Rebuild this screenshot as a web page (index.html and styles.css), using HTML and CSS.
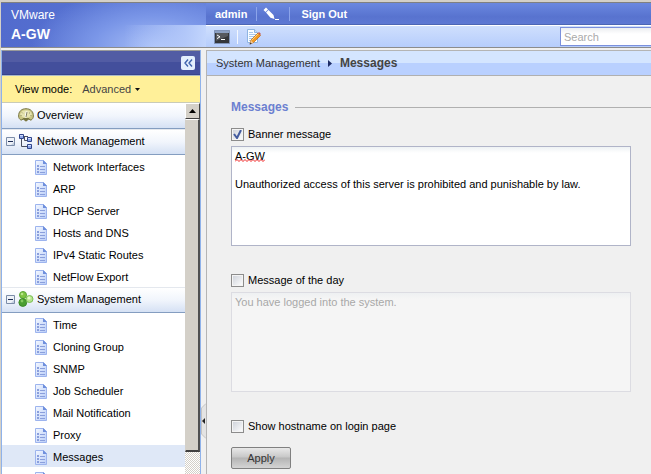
FILE: index.html
```html
<!DOCTYPE html>
<html lang="en">
<head>
<meta charset="utf-8">
<title>A-GW - Messages</title>
<link rel="stylesheet" href="styles.css">
</head>
<body>
<svg class="defs" aria-hidden="true">
  <defs>
    <linearGradient id="pageFill" x1="0" y1="0" x2="1" y2="1">
      <stop offset="0" stop-color="#f4f8ff"/><stop offset="1" stop-color="#b9cdf8"/>
    </linearGradient>
    <symbol id="page" viewBox="0 0 12 15">
      <path d="M.5 .5H8.500L11.500 3.500V14.500H.5Z" fill="url(#pageFill)" stroke="#9db4ee"/>
      <path d="M8 0L12 4H8Z" fill="#6f8fdc"/>
      <path d="M2 5h2v2H2zM2 8h2v2H2zM2 11h2v2H2z" fill="#8a9fdc"/>
      <path d="M5 6.500h5M5 9.500h5M5 12.500h5" stroke="#8a9fdc"/>
    </symbol>
    <symbol id="minus" viewBox="0 0 9 9">
      <path d="M.5 .5h8v8h-8z" fill="#eef2f8" stroke="#7b8ca8"/>
      <path d="M5 8h3V5z" fill="#c3cfe0"/>
      <path d="M2 4.500h5" stroke="#1d2c55"/>
    </symbol>
  </defs>
</svg>
<div class="app">
  <header class="top">
    <div class="brand"><span class="vendor">VMware</span><strong class="host">A-GW</strong></div>
    <div class="bars">
      <div class="userbar">
        <a href="#" class="user">admin</a>
        <span class="sep"></span>
        <button class="iconbtn edit" aria-label="Edit">
          <svg width="17" height="14" viewBox="0 0 17 14"><path d="M.5 3L3 .5 5 2.500 2.500 5zM3 5.500L5.500 3l5 5 1 4-4-1.300z" fill="#fff"/><path d="M12 12.500h4" stroke="#fff"/></svg>
        </button>
        <span class="sep"></span>
        <a href="#" class="signout">Sign Out</a>
      </div>
      <div class="toolbar">
        <button class="iconbtn" aria-label="Command line">
          <svg width="16" height="14" viewBox="0 0 16 14"><path d="M.5 .5h15v13H.5z" fill="#34363a" stroke="#7f93b8"/><path d="M1 1h14v2H1z" fill="#8b9fc2"/><path d="M2 3h12v3L2 11z" fill="#56595f"/><path d="M3 5l3 1.800-3 1.800M7 9.500h4" fill="none" stroke="#fff"/></svg>
        </button>
        <span class="sep light"></span>
        <button class="iconbtn" aria-label="Notes">
          <svg width="15" height="16" viewBox="0 0 15 16"><path d="M1.500 .5h7l3 3v10h-10z" fill="#fafdff" stroke="#8fb5e2"/><path d="M8.500 .5v3h3" fill="#cfe2f8" stroke="#8fb5e2"/><path d="M3 3.500h4M3 5.500h7M3 7.500h6M3 9.500h4M3 11.500h2" stroke="#a9c7ea"/><path d="M4 15l1-4 7-7 2.500 2.500-7 7z" fill="#f29a22" stroke="#bb6413" stroke-width=".7"/><path d="M5.500 11.500l7-7" stroke="#ffd272"/><path d="M4 15l1-3.500 2.500 2.500z" fill="#edc89c"/><path d="M3.500 15.500l1-2 1.300 1.200z" fill="#333"/><path d="M12 4l1-1 2 2-1 1z" fill="#c95b50"/></svg>
        </button>
        <input class="search" type="text" placeholder="Search" aria-label="Search">
      </div>
    </div>
  </header>
  <div class="body">
    <aside class="side">
      <div class="sidehead">
        <button class="collapse" aria-label="Collapse navigation">
          <svg width="9" height="8" viewBox="0 0 9 8"><path d="M4 .5L1 4l3 3.500M8 .5L5 4l3 3.500" fill="none" stroke="#3e62ad" stroke-width="1.400"/></svg>
        </button>
      </div>
      <div class="mode">
        <label for="mode">View mode:</label>
        <select id="mode"><option>Advanced</option></select>
        <svg width="5" height="3" viewBox="0 0 5 3"><path d="M0 0h5L2.500 3z" fill="#111"/></svg>
      </div>
      <div class="treewrap">
        <nav class="tree">
          <a href="#" class="group overview">
            <svg class="gicon" width="16" height="14" viewBox="0 0 16 14"><path d="M.6 8C.5 3.500 3.500 .7 8 .7S15.500 3.500 15.400 8c0 2-1 3.300-2.500 4.200L10.500 11 8 13.200 5.500 11l-2.400 1.200C1.600 11.300 .6 10 .6 8z" fill="#c9c583" stroke="#7d7a48"/><path d="M2 7.500C2.300 4 4.500 2.200 8 2.200s5.700 1.800 6 5.300L10.500 9.500h-5z" fill="#e6e3b0"/><path d="M3 12l2.500-2h5l2.500 2-2.500-.6L8 13.200 5.500 11.400z" fill="#77753f"/><path d="M2.500 7.500h1M4 4.500l.8.8M12 4.500l-.8.8M13.500 7.500h-1" stroke="#8d8a58"/><path d="M7.500 9.500l1.200-6" stroke="#fff" stroke-width="1.800"/><path d="M8 9l1-5" stroke="#5f5c35" stroke-width=".8"/></svg>
            <span>Overview</span></a>
          <a href="#" class="group"><svg class="toggle"><use href="#minus"/></svg>
            <svg class="gicon" width="16" height="16" viewBox="0 0 16 16"><path d="M6 3.500h4M3.500 6v7.500H9M6.500 3.500v4H9" fill="none" stroke="#4a4f60"/><g fill="#8fa8e8" stroke="#2f458c"><path d="M1.500 1.500h4v4h-4zM9.500 4.500h4v4h-4zM9.500 11.500h4v4h-4z"/></g><path d="M2 2h3v1H2zM10 5h3v1h-3zM10 12h3v1h-3z" fill="#d3defc"/></svg>
            <span>Network Management</span></a>
          <ul>
            <li><a href="#"><svg class="page"><use href="#page"/></svg>Network Interfaces</a></li>
            <li><a href="#"><svg class="page"><use href="#page"/></svg>ARP</a></li>
            <li><a href="#"><svg class="page"><use href="#page"/></svg>DHCP Server</a></li>
            <li><a href="#"><svg class="page"><use href="#page"/></svg>Hosts and DNS</a></li>
            <li><a href="#"><svg class="page"><use href="#page"/></svg>IPv4 Static Routes</a></li>
            <li><a href="#"><svg class="page"><use href="#page"/></svg>NetFlow Export</a></li>
          </ul>
          <a href="#" class="group"><svg class="toggle"><use href="#minus"/></svg>
            <svg class="gicon" width="16" height="16" viewBox="0 0 16 16"><circle cx="5" cy="4" r="3.500" fill="#7fc443" stroke="#5aa636"/><circle cx="4.800" cy="11.500" r="3.900" fill="#4b9f32" stroke="#3c8a28"/><circle cx="11.500" cy="8" r="3.500" fill="#b5e58d" stroke="#7cc056"/><circle cx="4" cy="3" r="1.300" fill="#b8e58b"/><circle cx="4" cy="10" r="1.400" fill="#86cb62"/><circle cx="11" cy="7" r="1.600" fill="#e3fbc9"/></svg>
            <span>System Management</span></a>
          <ul>
            <li><a href="#"><svg class="page"><use href="#page"/></svg>Time</a></li>
            <li><a href="#"><svg class="page"><use href="#page"/></svg>Cloning Group</a></li>
            <li><a href="#"><svg class="page"><use href="#page"/></svg>SNMP</a></li>
            <li><a href="#"><svg class="page"><use href="#page"/></svg>Job Scheduler</a></li>
            <li><a href="#"><svg class="page"><use href="#page"/></svg>Mail Notification</a></li>
            <li><a href="#"><svg class="page"><use href="#page"/></svg>Proxy</a></li>
            <li class="current"><a href="#"><svg class="page"><use href="#page"/></svg>Messages</a></li>
            <li><a href="#" aria-label="Next item"><svg class="page"><use href="#page"/></svg></a></li>
          </ul>
        </nav>
        <div class="scroll">
          <button class="up" aria-label="Scroll up"><svg width="7" height="4" viewBox="0 0 7 4"><path d="M0 4L3.500 0 7 4z"/></svg></button>
          <div class="thumb"></div>
          <div class="track"></div>
        </div>
      </div>
    </aside>
    <div class="splitter">
      <svg width="5" height="36" viewBox="0 0 5 36"><path d="M5 .5L.5 5v26L5 35.500" fill="#e4e4e4" stroke="#c4c4c4"/><path d="M4 15v6L1 18z" fill="#222"/></svg>
    </div>
    <main class="main">
      <div class="crumbs">
        <a href="#">System Management</a>
        <svg width="4" height="7" viewBox="0 0 4 7"><path d="M0 0l4 3.500L0 7z" fill="#1d2c66"/></svg>
        <strong>Messages</strong>
      </div>
      <form class="form">
        <h1><span>Messages</span></h1>
        <div class="check"><input type="checkbox" id="banner" checked><label for="banner">Banner message</label></div>
        <div class="field">
          <textarea aria-label="Banner message text" spellcheck="false">A-GW

Unauthorized access of this server is prohibited and punishable by law.</textarea>
          <svg class="squiggle" width="30" height="3" viewBox="0 0 30 3"><path d="M0 2.500l2-2 2 2 2-2 2 2 2-2 2 2 2-2 2 2 2-2 2 2 2-2 2 2 2-2 2 2 2-2" fill="none" stroke="#e22"/></svg>
        </div>
        <div class="check"><input type="checkbox" id="motd"><label for="motd">Message of the day</label></div>
        <div class="field">
          <textarea aria-label="Message of the day text" disabled>You have logged into the system.</textarea>
        </div>
        <div class="check"><input type="checkbox" id="hostname"><label for="hostname">Show hostname on login page</label></div>
        <button type="button" class="apply">Apply</button>
      </form>
    </main>
  </div>
</div>
</body>
</html>
```
FILE: styles.css
```css
* { box-sizing: border-box; }
body {
  margin: 0;
  font: 11px/14px "Liberation Sans", Arial, sans-serif;
  color: #000;
  background: #f0f0f0;
}
a { color: inherit; text-decoration: none; }
button, input, select, textarea { font: inherit; color: inherit; margin: 0; }
svg { display: block; flex: none; }
.defs { position: absolute; width: 0; height: 0; }
.app {
  height: 100vh;
  display: flex;
  flex-direction: column;
  overflow: hidden;
  border-top: 2px solid #d4d0c8;
  border-left: 1px solid #d4d0c8;
}

.top {
  display: flex;
  flex: none;
  height: 46px;
  border-top: 1px solid #808080;
  border-bottom: 1px solid #8c8c8c;
  background: #5a78d2;
}
.brand {
  width: 205px;
  flex: none;
  padding: 5px 10px;
  display: flex;
  flex-direction: column;
  gap: 4px;
  color: #fff;
  background:
    linear-gradient(90deg, #bcd0fc00 60%, #bcd0fccc 90%, #c3d6fd) 0 22px / 100% 22px no-repeat,
    radial-gradient(ellipse 125px 60px at 155px 44px, #a9c0f8, #7b97e8 50%, transparent),
    linear-gradient(90deg, #526bcd, #5672d2 50%, #5b77d6);
}
.vendor { font-size: 12px; }
.host { font-size: 14px; line-height: 16px; }
.bars { flex: 1; display: flex; flex-direction: column; }
.userbar {
  height: 22px;
  display: flex;
  align-items: center;
  padding-left: 9px;
  color: #fff;
  font-weight: bold;
  background: linear-gradient(#6b88e0, #5873cf 65%, #5e79d3);
  border-bottom: 1px solid #4c66b4;
}
.iconbtn { padding: 0; border: 0; background: none; }
.sep { width: 1px; height: 14px; background: #8ca4ea; margin: 0 6px 0 9px; }
.signout { padding-left: 5px; }
.toolbar {
  flex: 1;
  display: flex;
  align-items: center;
  padding-left: 8px;
  border-top: 1px solid #fff;
  background: linear-gradient(#cfdffd, #b6cdfc);
}
.sep.light { background: #f4f8ff; margin: 0 8px 0 7px; }
.search {
  width: 91px;
  height: 19px;
  margin-left: auto;
  padding: 0 3px;
  border: 1px solid #7b90dc;
  border-right: 0;
  background: linear-gradient(#eceef0, #fff 6px);
}
.search::placeholder { color: #aaa; opacity: 1; }

.body { flex: 1; display: flex; min-height: 0; padding-top: 2px; }
.side {
  width: 200px;
  flex: none;
  display: flex;
  flex-direction: column;
  border: solid #8fb2ea;
  border-width: 0 1px;
}
.sidehead {
  height: 25px;
  flex: none;
  display: flex;
  align-items: center;
  justify-content: flex-end;
  padding-right: 5px;
  border-top: 1px solid #9a9a9a;
  border-bottom: 1px solid #38448c;
  background: linear-gradient(#525ca4 11px, #434f9c 11px);
}
.collapse {
  width: 14px;
  height: 14px;
  padding: 0;
  display: grid;
  place-items: center;
  border: 0;
  border-radius: 2px;
  background: #e4effe;
}
.mode {
  height: 28px;
  flex: none;
  display: flex;
  align-items: center;
  padding-left: 13px;
  background: #fff099;
  border-top: 1px solid #a9b8c8;
  border-bottom: 1px solid #c9cbb8;
}
.mode select {
  appearance: none;
  padding: 0;
  margin: 0 4px 0 10px;
  border: 0;
  background: none;
  color: #444;
}
.treewrap { flex: 1; display: flex; min-height: 0; }
.tree { flex: 1; background: #fff; overflow: hidden; }
.group {
  height: 26px;
  display: flex;
  align-items: center;
  gap: 3px;
  padding: 0 4px 2px;
  background: linear-gradient(#fff, #f1f5fc 50%, #d5e1f4);
  border-top: 1px solid #e4e8ee;
  border-bottom: 1px solid #849dc0;
}
.overview { padding-left: 16px; border-top-color: #fff; }
.toggle { width: 9px; height: 9px; }
.tree ul { margin: 0; padding: 0; list-style: none; }
.tree li a { height: 22px; display: flex; align-items: center; gap: 6px; padding: 2px 0 0 33px; }
.page { width: 12px; height: 15px; }
.current { background: #dfe8f7; }

.scroll { width: 15px; display: flex; flex-direction: column; }
.up {
  height: 16px;
  padding: 0;
  display: grid;
  place-items: center;
  background: #d4d0c8;
  border: 1px solid;
  border-color: #fff #404040 #404040 #fff;
}
.thumb {
  height: 333px;
  background: #d4d0c8;
  border: solid;
  border-width: 1px 2px 2px 1px;
  border-color: #fff #505050 #404040 #d4d0c8;
}
.track { flex: 1; background: repeating-conic-gradient(#d4d0c8 0 25%, #fff 0 50%) 0 0 / 2px 2px; }

.splitter { width: 5px; flex: none; padding-top: 353px; }
.main { flex: 1; min-width: 0; border-left: 1px solid #b4b4b4; border-top: 1px solid #b4b4b4; }
.crumbs {
  height: 25px;
  display: flex;
  align-items: center;
  gap: 8px;
  padding-left: 9px;
  color: #333;
  background: linear-gradient(#d4e5ff 12px, #b9d0ff 12px);
  border-bottom: 1px solid #b0b0b0;
}
.form { padding: 22px 20px 0 24px; }
.form h1 {
  display: flex;
  align-items: center;
  gap: 7px;
  margin: 0 -20px 0 0;
  height: 18px;
  font-size: 12px;
  color: #6c80d0;
}
.form h1::after { content: ""; flex: 1; height: 1px; background: #b0b0b0; }
.crumbs strong { font-size: 12px; color: #444; }
.check { height: 18px; display: flex; align-items: center; gap: 4px; margin-bottom: 3px; }
.form h1 + .check { margin-top: 9px; }
.check input {
  appearance: none;
  width: 13px;
  height: 13px;
  border: 1px solid #8c8c8c;
  background: linear-gradient(135deg, #ccd0d8, #fff);
  box-shadow: inset 0 0 0 1px #f4f4f4;
}
.check input:checked {
  background: url("data:image/svg+xml,%3Csvg xmlns='http://www.w3.org/2000/svg' viewBox='0 0 11 11'%3E%3Cpath d='M2 5l3 4 4-8' fill='none' stroke='%23435b9f' stroke-width='2'/%3E%3C/svg%3E"), linear-gradient(135deg, #ccd0d8, #fff);
}
.field { position: relative; margin-bottom: 25px; }
.field textarea {
  display: block;
  width: 100%;
  height: 100px;
  padding: 2px 3px;
  resize: none;
  border: 1px solid #b0b4c8;
  border-radius: 0;
  background: linear-gradient(#eef2f4, #fff 6px);
  overflow: hidden;
}
.field textarea:disabled { color: #a8a8a8; border-color: #dcdce2; background: linear-gradient(#eef0f2, #f5f5f5 6px); }
.squiggle { position: absolute; left: 4px; top: 13px; }
.apply {
  width: 60px;
  height: 22px;
  margin-top: 9px;
  padding: 0;
  color: #333;
  border: 1px solid #808080;
  border-radius: 2px;
  background: linear-gradient(#e8e8e8, #c8c8c8 45%, #b4b4b4 50%, #d4d4d4);
}
```
